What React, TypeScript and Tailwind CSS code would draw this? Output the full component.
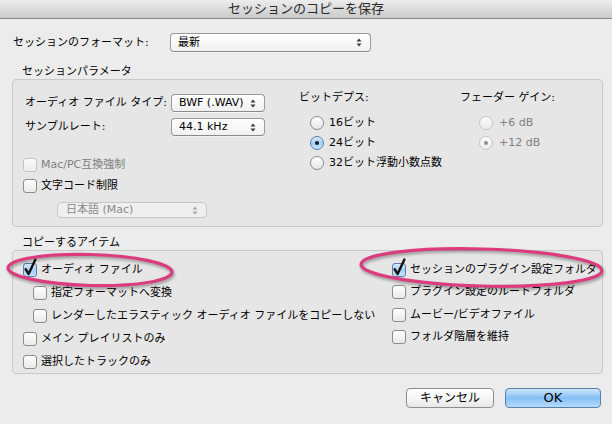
import React from "react";

function Arrows({ disabled }: { disabled?: boolean }) {
  const c = disabled ? "#a8a8a8" : "#3c3c3c";
  return (
    <svg width="6" height="9" viewBox="0 0 6 9" className="shrink-0">
      <path d="M0.5 3.5 L3 0.5 L5.5 3.5 Z" fill={c} />
      <path d="M0.5 5.5 L3 8.5 L5.5 5.5 Z" fill={c} />
    </svg>
  );
}

function Select({ value, className, disabled }: { value: string; className: string; disabled?: boolean }) {
  return (
    <div
      className={
        "flex items-center justify-between rounded-[4px] border pl-[7px] pr-[8px] " +
        (disabled
          ? "border-[#c6c6c6] bg-[#efefef] text-[#8a8a8a] "
          : "border-[#9a9a9a] border-b-[#8a8a8a] bg-gradient-to-b from-[#ffffff] to-[#f1f1f1] text-black shadow-[0_1px_0_rgba(255,255,255,0.6)] ") +
        className
      }
    >
      <span>{value}</span>
      <Arrows disabled={disabled} />
    </div>
  );
}

function Checkbox({ checked, disabled }: { checked?: boolean; disabled?: boolean }) {
  return (
    <span className="relative block h-[14px] w-[14px] shrink-0">
      <span
        className={
          "absolute inset-0 rounded-[3px] border " +
          (checked
            ? "border-[#5e7ea6] bg-gradient-to-b from-[#d7ebfd] via-[#a4cff7] to-[#c8e3fb]"
            : disabled
            ? "border-[#c4c4c4] bg-gradient-to-b from-[#fbfbfb] to-[#ededed]"
            : "border-[#8c8c8c] bg-gradient-to-b from-[#ffffff] to-[#e9e9e9]")
        }
      />
      {checked && (
        <svg className="absolute left-0 top-[-5px] overflow-visible" width="15" height="19" viewBox="0 0 15 19">
          <path d="M2.6 11.2 L5.6 16 L12.4 1.6" stroke="#111" strokeWidth="2.4" fill="none" strokeLinecap="round" strokeLinejoin="round" />
        </svg>
      )}
    </span>
  );
}

function Radio({ checked, disabled }: { checked?: boolean; disabled?: boolean }) {
  return (
    <span
      className={
        "flex h-[14px] w-[14px] shrink-0 items-center justify-center rounded-full border " +
        (checked && !disabled
          ? "border-[#5e7ea6] bg-gradient-to-b from-[#d7ebfd] via-[#a4cff7] to-[#c8e3fb]"
          : disabled
          ? "border-[#c6c6c6] bg-gradient-to-b from-[#fafafa] to-[#ececec]"
          : "border-[#8c8c8c] bg-gradient-to-b from-[#ffffff] to-[#e6e6e6]")
      }
    >
      {checked && <span className={"block h-[4px] w-[4px] rounded-full " + (disabled ? "bg-[#8e8e8e]" : "bg-[#1b1b1b]")} />}
    </span>
  );
}

function CheckRow({ label, checked, disabled, className }: { label: string; checked?: boolean; disabled?: boolean; className: string }) {
  return (
    <div className={"flex items-center gap-[4px] " + className}>
      <Checkbox checked={checked} disabled={disabled} />
      <span className={disabled ? "text-[#808080]" : ""}>{label}</span>
    </div>
  );
}

function RadioRow({ label, checked, disabled, gap }: { label: string; checked?: boolean; disabled?: boolean; gap: string }) {
  return (
    <div className={"flex h-[20px] items-center " + gap}>
      <Radio checked={checked} disabled={disabled} />
      <span className={disabled ? "text-[#808080]" : ""}>{label}</span>
    </div>
  );
}

export default function App() {
  return (
    <div className="relative h-[424px] w-[612px] overflow-hidden bg-[#ececec] font-[family-name:'DejaVu_Sans','Noto_Sans_CJK_JP',sans-serif] text-[11px] leading-[14px] text-black">
      <div className="flex h-[19px] items-center justify-center border-b border-[#8a8a8a] bg-gradient-to-b from-[#ededed] to-[#cacaca] text-[13px] text-[#2a2a2a]">
        セッションのコピーを保存
      </div>

      <div className="mt-[14px] flex items-center pl-[13px]">
        <span className="w-[157px]">セッションのフォーマット:</span>
        <Select className="h-[19px] w-[201px]" value="最新" />
      </div>

      <div className="mt-[12px] h-[15px] pl-[22px] leading-[15px]">セッションパラメータ</div>
      <div className="ml-[12px] mr-[9px] flex h-[148px] rounded-[4px] border border-[#c9c9c9] bg-[#e6e6e6] pl-[10px] pt-[11px]">
        <div className="w-[276px] pt-[3px]">
          <div className="flex h-[18px] items-center">
            <span className="ml-[2px] w-[146px]">オーディオ ファイル タイプ:</span>
            <Select className="h-[18px] w-[94px] pl-[6px]" value="BWF (.WAV)" />
          </div>
          <div className="mt-[6px] flex h-[18px] items-center">
            <span className="ml-[2px] w-[146px]">サンプルレート:</span>
            <Select className="h-[18px] w-[94px] pl-[6px]" value="44.1 kHz" />
          </div>
          <CheckRow className="mt-[22px] h-[14px]" label="Mac/PC互換強制" disabled />
          <CheckRow className="mt-[7px] h-[14px]" label="文字コード制限" />
          <div className="ml-[34px] mt-[9px]">
            <Select className="h-[16px] w-[150px] pl-[8px]" value="日本語 (Mac)" disabled />
          </div>
        </div>

        <div className="w-[161px]">
          <div className="h-[14px]">ビットデプス:</div>
          <div className="mt-[8px] pl-[11px]">
            <RadioRow label="16ビット" gap="gap-[5px]" />
            <RadioRow label="24ビット" gap="gap-[5px]" checked />
            <RadioRow label="32ビット浮動小数点数" gap="gap-[5px]" />
          </div>
        </div>

        <div>
          <div className="h-[14px]">フェーダー ゲイン:</div>
          <div className="mt-[8px] pl-[19px]">
            <RadioRow label="+6 dB" gap="gap-[6px]" disabled />
            <RadioRow label="+12 dB" gap="gap-[6px]" disabled checked />
          </div>
        </div>
      </div>

      <div className="mt-[8px] h-[15px] pl-[22px] leading-[15px]">コピーするアイテム</div>
      <div className="ml-[12px] mr-[9px] flex h-[124px] rounded-[4px] border border-[#c9c9c9] bg-[#e6e6e6] pl-[10px] pt-[7px]">
        <div className="w-[369px]">
          <CheckRow className="h-[23px]" label="オーディオ ファイル" checked />
          <CheckRow className="h-[23px] pl-[10px]" label="指定フォーマットへ変換" />
          <CheckRow className="h-[23px] pl-[10px]" label="レンダーしたエラスティック オーディオ ファイルをコピーしない" />
          <CheckRow className="h-[23px]" label="メイン プレイリストのみ" />
          <CheckRow className="h-[23px]" label="選択したトラックのみ" />
        </div>
        <div>
          <CheckRow className="h-[23px]" label="セッションのプラグイン設定フォルダ" checked />
          <CheckRow className="h-[22.5px]" label="プラグイン設定のルートフォルダ" />
          <CheckRow className="h-[22.5px]" label="ムービー/ビデオファイル" />
          <CheckRow className="h-[22.5px]" label="フォルダ階層を維持" />
        </div>
      </div>

      <div className="mt-[14px] flex justify-end gap-[11px] pr-[11px]">
        <button className="flex h-[20px] w-[88px] items-center justify-center rounded-[4px] border border-[#8e8e8e] bg-gradient-to-b from-[#ffffff] via-[#f6f6f6] to-[#e8e8e8] text-[12px] text-black">
          キャンセル
        </button>
        <button className="flex h-[20px] w-[96px] items-center justify-center rounded-[4px] border border-[#5a7eae] bg-gradient-to-b from-[#cfe6fc] via-[#86bff5] to-[#b6dbfb] text-[13px] text-black">
          OK
        </button>
      </div>

      <svg className="pointer-events-none absolute inset-0 drop-shadow-[1px_2px_1.5px_rgba(0,0,0,0.35)]" width="612" height="424" viewBox="0 0 612 424">
        <ellipse cx="90" cy="270" rx="82" ry="15.5" transform="rotate(1.5 90 270)" fill="none" stroke="#dc3c7d" strokeWidth="3.2" />
        <ellipse cx="481.5" cy="267.5" rx="120.5" ry="18.5" transform="rotate(1.5 481.5 267.5)" fill="none" stroke="#dc3c7d" strokeWidth="3.2" />
      </svg>
    </div>
  );
}
